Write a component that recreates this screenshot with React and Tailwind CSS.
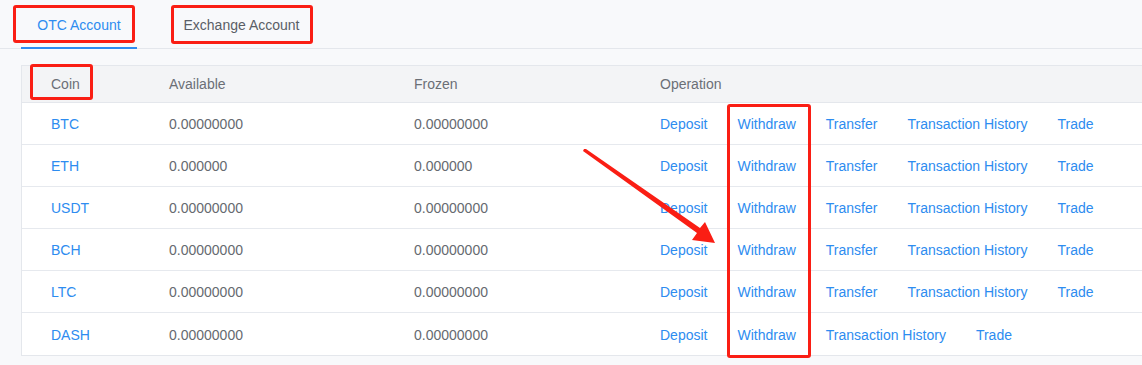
import React from 'react';

const coins = [
  { name: 'BTC', available: '0.00000000', frozen: '0.00000000', transfer: true },
  { name: 'ETH', available: '0.000000', frozen: '0.000000', transfer: true },
  { name: 'USDT', available: '0.00000000', frozen: '0.00000000', transfer: true },
  { name: 'BCH', available: '0.00000000', frozen: '0.00000000', transfer: true },
  { name: 'LTC', available: '0.00000000', frozen: '0.00000000', transfer: true },
  { name: 'DASH', available: '0.00000000', frozen: '0.00000000', transfer: false },
];

const Mark = ({ className }) => (
  <div className={`absolute border-[3px] border-[#fa1e14] rounded-[3px] pointer-events-none ${className}`} />
);

const App = () => {
  return (
    <div
      className="relative w-[1142px] h-[365px] bg-[#f8f9fb] overflow-hidden text-[14px] text-[#666a70]"
      style={{ fontFamily: '"Liberation Sans", Arial, sans-serif' }}
    >
      {/* Tabs */}
      <div className="flex h-[49px] border-b border-[#e4e7ec] pl-[21px]">
        <div className="w-[116px] h-[49px] flex items-center justify-center text-[#2d8cf0] border-b-[2px] border-[#2d8cf0] pt-[3px]">
          OTC Account
        </div>
        <div className="ml-[34px] w-[141px] h-[48px] flex items-center justify-center text-[#5a5e66] pt-[3px]">
          Exchange Account
        </div>
      </div>

      {/* Table */}
      <div className="ml-[21px] mt-[16px] bg-white border-l border-t border-b border-[#e4e7ec]">
        <div className="flex items-center h-[37px] bg-[#f3f4f6] border-b border-[#e4e7ec] text-[#6b6f76] pt-[1px]">
          <div className="w-[147px] pl-[29px]">Coin</div>
          <div className="w-[245px]">Available</div>
          <div className="w-[246px]">Frozen</div>
          <div>Operation</div>
        </div>
        {coins.map((c, i) => (
          <div
            key={c.name}
            className={`flex items-center h-[42px] pt-[2px] ${i < coins.length - 1 ? 'border-b border-[#e6e9ee]' : ''}`}
          >
            <div className="w-[147px] pl-[29px] text-[#2d8cf0]">{c.name}</div>
            <div className="w-[245px]">{c.available}</div>
            <div className="w-[246px]">{c.frozen}</div>
            <div className="flex gap-[30px] text-[#2d8cf0]">
              <span>Deposit</span>
              <span>Withdraw</span>
              {c.transfer && <span>Transfer</span>}
              <span>Transaction History</span>
              <span>Trade</span>
            </div>
          </div>
        ))}
      </div>

      {/* Annotations */}
      <Mark className="left-[13px] top-[5px] w-[122px] h-[38px]" />
      <Mark className="left-[171px] top-[5px] w-[142px] h-[39px]" />
      <Mark className="left-[30px] top-[64px] w-[63px] h-[36px]" />
      <Mark className="left-[727px] top-[104px] w-[84px] h-[254px]" />
      <svg className="absolute left-0 top-0 pointer-events-none" width="1142" height="365">
        <polygon points="584,149 586,149 700,228 705,222 715,243 692,240 697,233 583,151" fill="#fa1e14" />
      </svg>
    </div>
  );
};

export default App;
